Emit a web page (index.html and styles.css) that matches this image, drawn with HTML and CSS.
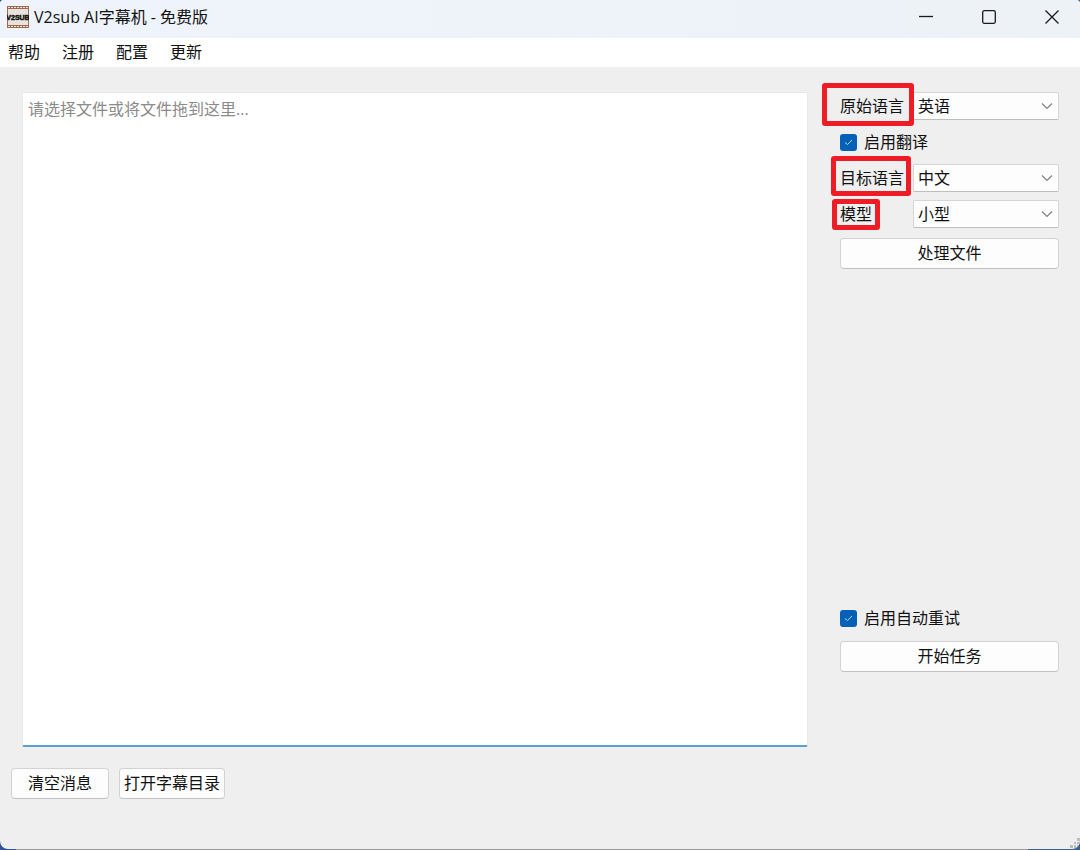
FILE: index.html
```html
<!DOCTYPE html>
<html lang="zh-CN">
<head>
    <meta charset="UTF-8">
    <meta name="viewport" content="width=device-width, initial-scale=1.0">
    <title>V2sub AI字幕机 - 免费版</title>
    <link rel="stylesheet" href="styles.css">
</head>
<body>

    <div class="window">
        <header class="titlebar">
            <svg class="app-icon" width="22" height="22" viewBox="0 0 22 22" aria-hidden="true">
                <rect width="22" height="22" fill="#9a6a50"/>
                <rect x="1" y="3" width="20" height="16" fill="#e9e1dc"/>
                <path d="M1 1.5H21M1 20.5H21" stroke="#f3e3d8" stroke-width="1" stroke-dasharray="2 1"/>
                <text x="11" y="14" text-anchor="middle" class="app-icon-text">V2SUB</text>
            </svg>
            <h1>V2sub AI字幕机 - 免费版</h1>
            <div class="window-buttons">
                <button type="button" aria-label="最小化">
                    <svg width="14" height="14" viewBox="0 0 14 14"><path d="M0 6.5H14"/></svg>
                </button>
                <button type="button" aria-label="最大化">
                    <svg width="14" height="14" viewBox="0 0 14 14"><rect x="0.7" y="0.7" width="12.6" height="12.6" rx="1.5"/></svg>
                </button>
                <button type="button" aria-label="关闭">
                    <svg width="14" height="14" viewBox="0 0 14 14"><path d="M0.5 0.5L13.5 13.5M13.5 0.5L0.5 13.5"/></svg>
                </button>
            </div>
        </header>

        <nav class="menubar">
            <a href="#">帮助</a>
            <a href="#">注册</a>
            <a href="#">配置</a>
            <a href="#">更新</a>
        </nav>

        <main class="content">
            <textarea class="file-drop" aria-label="文件" placeholder="请选择文件或将文件拖到这里..."></textarea>

            <div class="sidebar">
                <div class="field">
                    <label for="source">原始语言<span class="mark mark-source"></span></label>
                    <select id="source"><option>英语</option></select>
                </div>
                <label class="check"><input type="checkbox" checked>启用翻译</label>
                <div class="field">
                    <label for="target">目标语言<span class="mark mark-target"></span></label>
                    <select id="target"><option>中文</option></select>
                </div>
                <div class="field">
                    <label for="model">模型<span class="mark mark-model"></span></label>
                    <select id="model"><option>小型</option></select>
                </div>
                <button type="button" class="btn btn-process">处理文件</button>

                <div class="task">
                    <label class="check"><input type="checkbox" checked>启用自动重试</label>
                    <button type="button" class="btn">开始任务</button>
                </div>
            </div>
        </main>

        <footer class="actions">
            <button type="button" class="btn btn-clear">清空消息</button>
            <button type="button" class="btn btn-open">打开字幕目录</button>
            <svg class="grip" width="10" height="12" viewBox="0 0 10 12" aria-hidden="true">
                <path d="M7 1h3v3h-3zM4 5h2v2h-2zM7 5h3v2h-3zM0 8h3v3h-3zM4 8h2v3h-2zM7 8h3v3h-3z"/>
            </svg>
        </footer>
    </div>

</body>
</html>
```
FILE: styles.css
```css
* {
    box-sizing: border-box;
}

body {
    margin: 0;
    padding-bottom: 1px;
    height: 100vh;
    background: linear-gradient(to right, #2f5597 16px, #999 16px, #999 calc(100% - 52px), #3f5f92 calc(100% - 52px));
    color: #111;
}

body, button, select, textarea {
    font-family: "Open Sans", "Noto Sans CJK SC", sans-serif;
    font-size: 16px;
    line-height: 24px;
}

.window {
    display: flex;
    flex-direction: column;
    height: 100%;
    background-color: #efefef;
    border-radius: 4px 4px 8px 8px;
    overflow: hidden;
}

.titlebar {
    display: flex;
    align-items: center;
    height: 38px;
    padding: 0 0 4px 7px;
    background: linear-gradient(to right, #eff3fb, #edf2f7);
}

.titlebar h1 {
    margin: 0 auto 0 5px;
    font-size: 16px;
    font-weight: normal;
}

.app-icon-text {
    font-family: "Liberation Sans", sans-serif;
    font-size: 7px;
    font-weight: bold;
    fill: #111;
    stroke: #111;
    stroke-width: 0.5px;
}

.window-buttons {
    display: flex;
    gap: 7px;
}

.window-buttons button {
    display: flex;
    align-items: center;
    justify-content: center;
    width: 56px;
    height: 34px;
    padding: 0;
    border: none;
    background: none;
}

.window-buttons svg {
    fill: none;
    stroke: #1a1a1a;
    stroke-width: 1.3;
}

.menubar {
    display: flex;
    gap: 22px;
    height: 29px;
    padding: 2px 8px;
    background-color: #fff;
}

.menubar a {
    color: #111;
    text-decoration: none;
}

.content {
    display: flex;
    flex: 1;
    gap: 32px;
    padding: 25px 21px 21px 22px;
}

.file-drop {
    flex: 1;
    padding: 4px 5px;
    border: 1px solid #e8e8e8;
    border-bottom: 2px solid #5a9fd8;
    border-radius: 2px;
    background-color: #fff;
    outline: none;
    resize: none;
}

.file-drop::placeholder {
    color: #8a8a8a;
}

.sidebar {
    display: flex;
    flex-direction: column;
    gap: 8px;
    width: 219px;
}

.field {
    display: flex;
    justify-content: space-between;
    align-items: center;
}

.field label {
    position: relative;
}

.field select {
    width: 146px;
    height: 28px;
    padding: 0 4px;
    border: 1px solid #d6d6d6;
    border-bottom-color: #bdbdbd;
    border-radius: 2px;
    background: #fdfdfd url("data:image/svg+xml,%3Csvg xmlns='http://www.w3.org/2000/svg' width='12' height='8'%3E%3Cpath d='M1 1.5L6 6.5L11 1.5' fill='none' stroke='%23808080' stroke-width='1.2'/%3E%3C/svg%3E") no-repeat right 5px center;
    color: #111;
    appearance: none;
}

/* red frames over the labels */
.mark {
    position: absolute;
    z-index: 1;
    border: 5px solid #ee1c25;
    border-radius: 3px;
    pointer-events: none;
}

.mark-source {
    inset: -11px -10px -8px -18px;
}

.mark-target {
    inset: -10px -7px -6px -9px;
}

.mark-model {
    inset: -3px -8px -4px -8px;
}

.check {
    display: flex;
    align-items: center;
    gap: 7px;
    height: 28px;
}

.check input {
    width: 17px;
    height: 17px;
    margin: 0;
    border-radius: 3px;
    background: #0560b8 url("data:image/svg+xml,%3Csvg xmlns='http://www.w3.org/2000/svg' width='9' height='7'%3E%3Cpath d='M1 3.5L3.5 5.5L8 1' fill='none' stroke='%23b5d6f2' stroke-width='1'/%3E%3C/svg%3E") no-repeat center;
    appearance: none;
}

.btn {
    height: 31px;
    padding: 0 4px 2px;
    border: 1px solid #d2d2d2;
    border-bottom-color: #c2c2c2;
    border-radius: 4px;
    background-color: #fdfdfd;
    color: #111;
}

.btn-process {
    margin-top: 2px;
}

.task {
    display: flex;
    flex-direction: column;
    gap: 9px;
    margin-top: auto;
    margin-bottom: 75px;
}

.actions {
    display: flex;
    gap: 10px;
    height: 81px;
    padding-left: 11px;
}

.btn-clear {
    padding: 0 16px 2px;
}

.grip {
    align-self: flex-end;
    margin-left: auto;
    fill: #bdbdbd;
}
```
